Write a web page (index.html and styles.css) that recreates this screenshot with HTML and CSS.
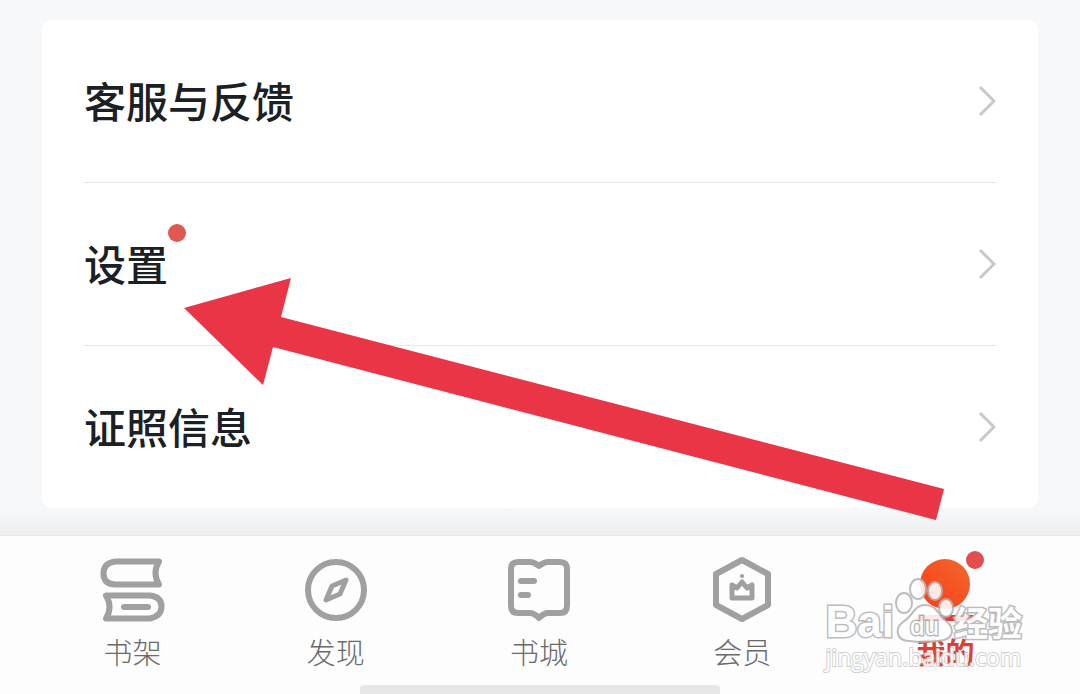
FILE: index.html
```html
<!DOCTYPE html>
<html lang="zh-CN">

<head>
    <meta charset="UTF-8">
    <meta name="viewport" content="width=device-width, initial-scale=1.0">
    <title>我的</title>
    <link rel="stylesheet" href="styles.css">
</head>

<body>
    <main class="content">
        <div class="card">
            <a href="#" class="row">
                <span class="row-label">客服与反馈</span>
                <svg class="chevron" viewBox="0 0 18 32"><path d="M2 2L16 16L2 30" /></svg>
            </a>
            <a href="#" class="row">
                <span class="row-label">设置<i class="dot row-dot"></i></span>
                <svg class="chevron" viewBox="0 0 18 32"><path d="M2 2L16 16L2 30" /></svg>
            </a>
            <a href="#" class="row">
                <span class="row-label">证照信息</span>
                <svg class="chevron" viewBox="0 0 18 32"><path d="M2 2L16 16L2 30" /></svg>
            </a>
            <!-- pointer to the settings row -->
            <svg class="arrow" viewBox="0 0 760 242">
                <path d="M0 30L107 0L97 39L760 211L752 242L89 69L79 107Z" />
            </svg>
        </div>
    </main>

    <nav class="tabs">
        <a href="#" class="tab">
            <svg class="icon" viewBox="0 0 68 68">
                <path d="M60 6.500H16Q4.500 8 4.500 18.500T16 29.500H60Q53 18 60 6.500Z" />
                <path d="M7 40.500H51Q62.500 42 62.500 51.500T51 63.500H7Q14 52 7 40.500Z" />
                <path d="M25 52H49" />
            </svg>
            <span>书架</span>
        </a>
        <a href="#" class="tab">
            <svg class="icon" viewBox="0 0 68 68">
                <circle cx="34" cy="35" r="28" />
                <path class="thin" d="M44 25L30 31L24 45L38 39Z" />
            </svg>
            <span>发现</span>
        </a>
        <a href="#" class="tab">
            <svg class="icon" viewBox="0 0 68 68">
                <path d="M34 11Q29 7 25 7H13Q6 7 6 14V51Q6 58 13 58H25Q29 58 34 63Q39 58 43 58H55Q62 58 62 51V14Q62 7 55 7H43Q39 7 34 11Z" />
                <path d="M16 26H29M16 40H23" />
            </svg>
            <span>书城</span>
        </a>
        <a href="#" class="tab">
            <svg class="icon" viewBox="0 0 68 68">
                <path d="M34 5L60 19V50L34 64L8 50V19Z" />
                <path class="thin" d="M24 43V30L29 33L34 27L39 33L44 30V43Z" />
                <circle class="fill" cx="34" cy="21" r="2" />
            </svg>
            <span>会员</span>
        </a>
        <a href="#" class="tab active">
            <svg class="icon" viewBox="0 0 68 68">
                <defs>
                    <linearGradient id="sun" x1="1" y1="0" x2="0" y2="1">
                        <stop offset="0" stop-color="#f0682c" />
                        <stop offset="1" stop-color="#fb3d18" />
                    </linearGradient>
                </defs>
                <circle class="sun" cx="34" cy="29" r="25" />
                <path class="base" d="M6 63H62" />
            </svg>
            <span>我的</span>
            <i class="dot tab-dot"></i>
        </a>

        <div class="watermark">
            <div class="brand">
                <span class="bai">Bai</span>
                <span class="paw">
                    <svg viewBox="0 0 60 66">
                        <ellipse cx="10" cy="26" rx="8" ry="10" />
                        <ellipse cx="24" cy="12" rx="8" ry="10" />
                        <ellipse cx="41" cy="14" rx="7" ry="9" />
                        <ellipse cx="52" cy="31" rx="7" ry="9" />
                        <path d="M31 28C20 28 20 38 9 45C0 52 3 64 15 64C24 65 40 65 50 63C60 60 60 51 53 45C43 37 43 28 31 28Z" />
                    </svg>
                    <span class="du">du</span>
                </span>
                <span class="jingyan">经验</span>
            </div>
            <div class="site">jingyan.baidu.com</div>
        </div>
        <div class="home-bar"></div>
    </nav>
</body>

</html>
```

FILE: styles.css
```css
* {
    margin: 0;
    padding: 0;
    box-sizing: border-box;
}

body {
    min-height: 100vh;
    display: flex;
    flex-direction: column;
    background: #f6f8fa;
    font-family: "Noto Sans CJK SC", sans-serif;
}

a {
    color: inherit;
    text-decoration: none;
}

.content {
    padding: 20px 42px 27px;
    background: linear-gradient(#f6f8fa 95%, #edeef0);
}

.card {
    position: relative;
    padding: 0 42px;
    background: #fff;
    border-radius: 10px;
}

.row {
    height: 163px;
    display: flex;
    align-items: center;
    justify-content: space-between;
    border-bottom: 1px solid #e6e7e8;
}

.row:nth-child(3) {
    height: 162px;
    border-bottom: none;
}

.row-label {
    position: relative;
    font-size: 42px;
    line-height: 62px;
    padding-bottom: 2px;
    font-weight: 500;
    color: #1b2025;
}

.chevron {
    width: 18px;
    height: 32px;
    fill: none;
    stroke: #c8c8c8;
    stroke-width: 3;
}

.dot {
    position: absolute;
    width: 18px;
    height: 18px;
    border-radius: 50%;
    background: #e2574f;
}

.row-dot {
    top: -8px;
    right: -18px;
}

.arrow {
    position: absolute;
    left: 142px;
    top: 258px;
    width: 760px;
    fill: #ea3546;
}

.tabs {
    position: relative;
    flex: 1;
    display: flex;
    padding: 19px 33px 0 31px;
    background: #fdfdfd;
    border-top: 1px solid #e4e6e9;
}

.tab {
    position: relative;
    flex: 1;
    display: flex;
    flex-direction: column;
    align-items: center;
    gap: 8px;
    font-size: 29px;
    line-height: 40px;
    font-weight: 300;
    color: #6a6a6a;
}

.icon {
    width: 68px;
    height: 68px;
    fill: none;
    stroke: #a0a0a0;
    stroke-width: 6;
    stroke-linecap: round;
    stroke-linejoin: round;
}

.icon .thin {
    stroke-width: 5;
}

.icon .fill {
    fill: #a0a0a0;
    stroke: none;
}

.icon .sun {
    fill: url(#sun);
    stroke: none;
}

.icon .base {
    stroke: #e23b2c;
    stroke-linecap: butt;
}

.active {
    color: #dc4030;
    font-weight: 700;
}

.tab-dot {
    top: -4px;
    left: 60%;
    background: #e34d4d;
}

.watermark {
    position: absolute;
    right: 58px;
    top: 41px;
    color: #fff;
    opacity: 0.88;
}

.brand {
    height: 66px;
    display: flex;
    align-items: flex-end;
}

.bai,
.du,
.jingyan,
.site {
    -webkit-text-stroke: 3px #b4b4b4;
    paint-order: stroke fill;
}

.bai {
    font: 700 44px/42px "Liberation Sans", sans-serif;
}

.paw {
    position: relative;
    width: 60px;
    height: 66px;
}

.paw svg {
    width: 60px;
    height: 66px;
    fill: #fff;
    stroke: #b4b4b4;
    stroke-width: 2;
}

.du {
    position: absolute;
    left: 16px;
    bottom: 4px;
    font: 400 26px/26px "Liberation Sans", sans-serif;
}

.jingyan {
    font-size: 34px;
    line-height: 42px;
    font-weight: 700;
}

.site {
    font: 400 23px/28px "Open Sans", sans-serif;
    -webkit-text-stroke: 2px #ccc;
}

.home-bar {
    position: absolute;
    bottom: 0;
    left: 50%;
    width: 360px;
    height: 9px;
    margin-left: -180px;
    border-radius: 4px 4px 0 0;
    background: #e6e6e6;
}
```
